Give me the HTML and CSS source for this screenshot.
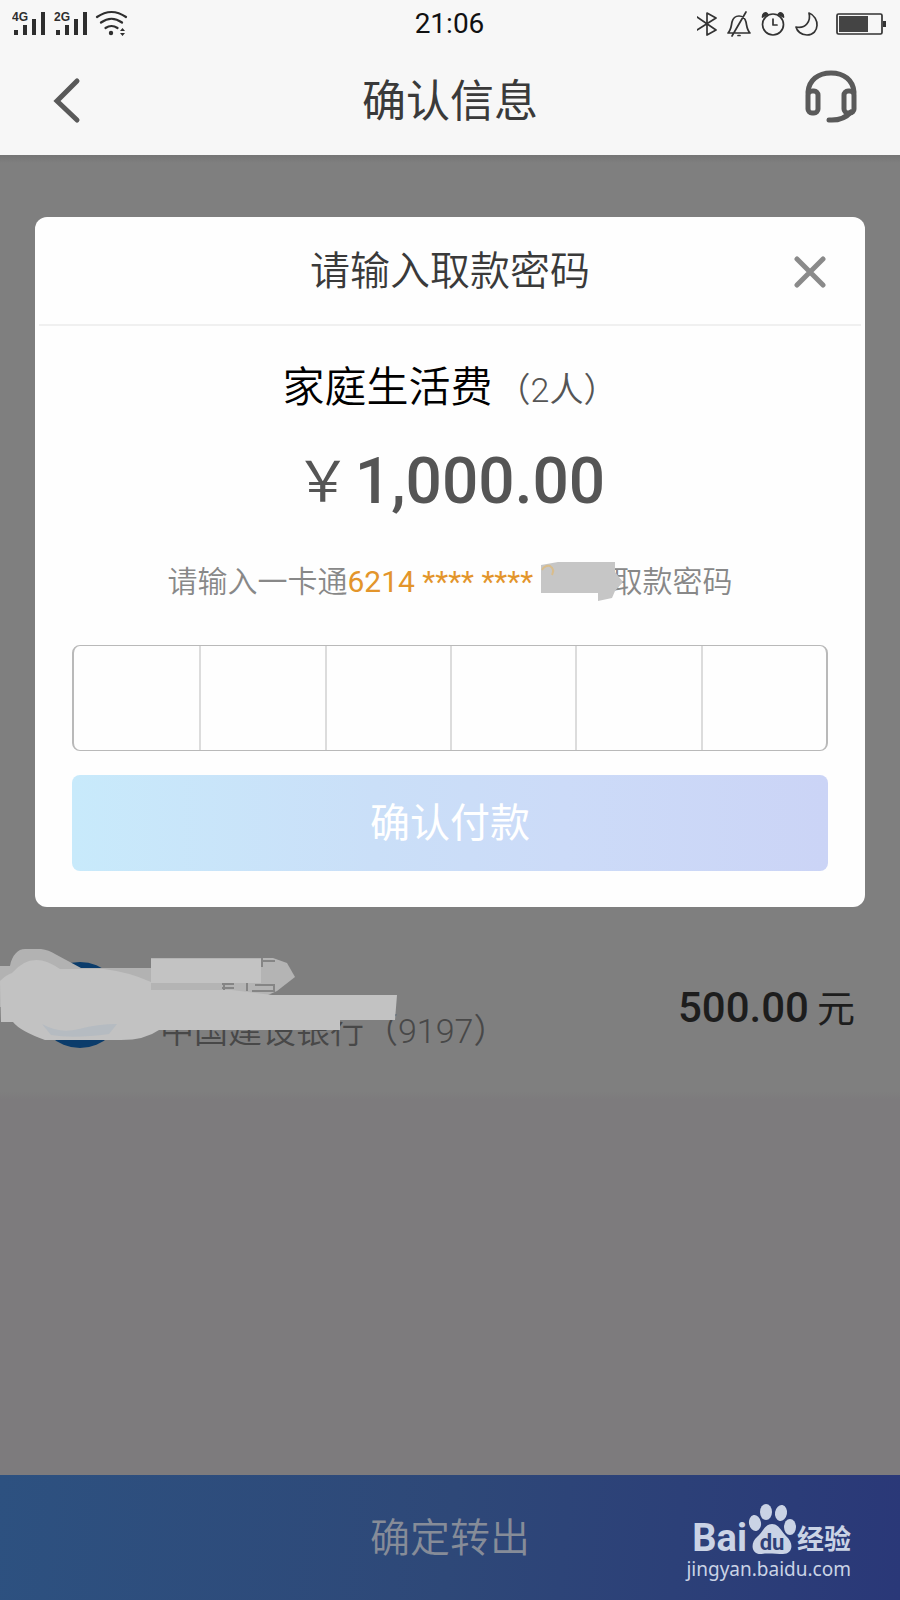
FILE: index.html
```html
<!DOCTYPE html>
<html lang="zh-CN">
<head>
<meta charset="utf-8">
<meta name="viewport" content="width=device-width, initial-scale=1">
<title>确认信息</title>
<link rel="stylesheet" href="styles.css">
</head>
<body>
<header class="top">
  <div class="status">
    <svg class="status-left" width="120" height="30" viewBox="0 0 120 30" aria-hidden="true">
      <g fill="#2e2e2e">
        <text x="0" y="12" class="net">4G</text>
        <path d="M2 21h4v5H2zM11 16h4v10h-4zM20 10h4v16h-4zM29 3h4v23h-4z"/>
        <text x="42" y="12" class="net">2G</text>
        <path d="M44 21h4v5h-4zM53 16h4v10h-4zM62 10h4v16h-4zM71 3h4v23h-4z"/>
        <circle cx="99" cy="24" r="2.200"/>
        <path d="M108 22l2.500-3 2.500 3zM108 24l2.500 3 2.500-3z"/>
      </g>
      <g fill="none" stroke="#2e2e2e" stroke-width="2.200" stroke-linecap="round">
        <path d="M85 8q14.500-10 29 0M89 13.500q10.500-7.500 21 0M93.500 19q6-4 12 0"/>
      </g>
    </svg>
    <time class="clock">21:06</time>
    <svg class="status-right" width="190" height="30" viewBox="0 0 190 30" aria-hidden="true">
      <g fill="none" stroke="#333" stroke-width="1.700" stroke-linejoin="round" stroke-linecap="round">
        <path d="M0 8l19 13-9 5V4l9 5L0 21"/>
        <path d="M31 24c3-3 3-6 4-11 1-4 3-6 7-6s6 2 7 6c1 5 1 8 4 11zM41 26.500h2M49 3L35 27"/>
        <circle cx="76" cy="15.500" r="10.500"/>
        <path d="M76 10v6h4"/>
        <path d="M65.500 8c0-4 3-5 5-3zM86.500 8c0-4-3-5-5-3z" fill="#333"/>
        <path d="M112 4c11 4 11 22-2 22-6 0-10-4-11-8 10 2 15-6 13-14z"/>
        <rect x="140" y="5" width="45" height="20" rx="1.500"/>
        <path d="M142 7h29v16h-29z" fill="#444" stroke="none"/>
        <path d="M186 12h3v6h-3z" fill="#333" stroke="none"/>
      </g>
    </svg>
  </div>
  <nav class="nav">
    <button class="icon-btn" type="button" aria-label="返回">
      <svg width="30" height="48" viewBox="0 0 30 48"><path d="M25 5L5 25l20 19" fill="none" stroke="#595959" stroke-width="5" stroke-linecap="round" stroke-linejoin="miter"/></svg>
    </button>
    <h1 class="nav-title">确认信息</h1>
    <button class="icon-btn help" type="button" aria-label="客服">
      <svg width="54" height="54" viewBox="0 0 54 54"><g fill="none" stroke="#5a5a5a" stroke-width="5" stroke-linecap="round"><path d="M4 22C5 10 14 3 27 3S49 10 50 22"/><rect x="4" y="21" width="10" height="22" rx="4"/><rect x="40" y="21" width="10" height="22" rx="4"/><path d="M47 42q-8 9-22 8"/></g></svg>
    </button>
  </nav>
</header>

<main class="content">
  <section class="dialog" role="dialog" aria-labelledby="dlg-title">
    <div class="dialog-head">
      <h2 class="dialog-title" id="dlg-title">请输入取款密码</h2>
      <button class="close" type="button" aria-label="关闭">
        <svg width="32" height="32" viewBox="0 0 32 32"><path d="M3 3l26 26M29 3L3 29" fill="none" stroke="#8a8a8a" stroke-width="5" stroke-linecap="round"/></svg>
      </button>
    </div>
    <div class="dialog-body">
      <p class="purpose"><span>家庭生活费</span><span class="people">（2人）</span></p>
      <p class="total"><span class="yen">￥</span><span>1,000.00</span></p>
      <p class="hint">请输入一卡通<span class="card-no">6214 **** **** <span class="masked">2<svg class="mask" width="84" height="42" viewBox="0 0 84 42" aria-hidden="true"><path d="M0 3L17 0h57v10l8 10-8 9-3 7-14 3v-8H0z" fill="#c6c6c6"/><path d="M1 8q3-5 8-4 5 3 2 9" fill="none" stroke="#d9bd8c" stroke-width="2"/></svg></span></span>取款密码</p>
      <div class="pin" role="group" aria-label="取款密码">
        <input type="password" maxlength="1" aria-label="第1位">
        <input type="password" maxlength="1" aria-label="第2位">
        <input type="password" maxlength="1" aria-label="第3位">
        <input type="password" maxlength="1" aria-label="第4位">
        <input type="password" maxlength="1" aria-label="第5位">
        <input type="password" maxlength="1" aria-label="第6位">
      </div>
      <button class="pay" type="button">确认付款</button>
    </div>
  </section>

  <section class="member">
    <div class="logo"></div>
    <div class="bank">中国建设银行（9197）</div>
    <div class="sum"><span class="sum-num">500.00</span><span class="sum-unit">元</span></div>
    <svg class="scribble" width="400" height="100" viewBox="0 0 400 100" aria-hidden="true">
      <path d="M151 9h122l14 5 8 14-18 14-9 4H151z" fill="#b4b4b4"/>
      <path d="M0 17h10C12 6 18 0 25 0h16q8 1 14 5l26 14h70v35L0 58z" fill="#b2b2b2"/>
      <g fill="none" stroke="#858585" stroke-width="2"><path d="M262 9v9M262 12h13M222 35h12M224 35v6M247 34v8M255 36h19v6h-22M222 39h12"/></g>
      <path d="M151 10h110v24H151z" fill="#c3c3c3"/>
      <path d="M0 32q6-6 12-8 20-24 48-4h44q25 3 47 13v8h81l40 5h125l-2 25h-55v10H159q-14 10-38 10H45Q20 82 13 73H1z" fill="#c2c2c2"/>
      <path d="M42 75q18 10 37 5t38-5l-8 10q-36 5-58 1z" fill="#b5bbc1"/>
    </svg>
  </section>
</main>

<footer class="footer">
  <button class="transfer" type="button">确定转出</button>
  <div class="brand">
    <div class="brand-row">
      <span class="bai">Bai</span>
      <svg width="50" height="52" viewBox="0 0 50 52" aria-hidden="true">
        <g fill="#cad3e5"><ellipse cx="8" cy="20" rx="6" ry="8" transform="rotate(-10 8 20)"/><ellipse cx="19" cy="9" rx="6" ry="8"/><ellipse cx="34" cy="10" rx="6" ry="8" transform="rotate(10 34 10)"/><ellipse cx="43" cy="24" rx="6" ry="8"/><path d="M25 21c7 0 9 7 14 12 9 8 6 18-3 18-6 0-16-1-21 0C4 52 3 40 10 34c6-5 8-13 15-13z"/></g>
        <text x="25" y="47" class="du">du</text>
      </svg>
      <span class="jy">经验</span>
    </div>
    <div class="brand-url">jingyan.baidu.com</div>
  </div>
</footer>
</body>
</html>
```
FILE: styles.css
```css
* { box-sizing: border-box; }

body {
  margin: 0;
  min-height: 100vh;
  display: flex;
  flex-direction: column;
  background: #7d7b7d;
  font-family: Roboto, "Noto Sans CJK SC", sans-serif;
  color: #3a3a3a;
}

h1, h2, p { margin: 0; font-weight: 350; }

button {
  border: 0;
  padding: 0;
  background: none;
  font-family: inherit;
  cursor: pointer;
}

svg { display: block; }

/* status bar and navigation */
.top { background: #f7f7f7; }

.status {
  display: grid;
  grid-template-columns: 1fr auto 1fr;
  align-items: center;
  height: 48px;
  padding: 0 13px 0 12px;
}

.status-right { justify-self: end; }

.net { font: bold 12px "Liberation Sans", sans-serif; }

.clock {
  font-size: 28px;
  line-height: 48px;
  color: #111;
}

.nav {
  display: grid;
  grid-template-columns: 1fr auto 1fr;
  align-items: center;
  height: 107px;
  padding: 0 42px 4px;
}

.icon-btn { justify-self: start; padding-left: 10px; }

.help { justify-self: end; padding: 0 0 6px; }

.nav-title {
  padding-top: 4px;
  font-size: 44px;
  line-height: 64px;
  font-weight: 400;
}

/* dimmed page */
.content {
  flex: 1;
  padding-top: 62px;
  background: linear-gradient(#757575, #7f7f7f 8px, #7f7f7f 936px, #7d7b7d 944px);
}

.dialog {
  margin: 0 35px;
  border-radius: 12px;
  background: #fefefe;
}

.dialog-head {
  position: relative;
  height: 109px;
  margin: 0 4px;
  padding-top: 25px;
  border-bottom: 2px solid #f0f0f0;
  text-align: center;
}

.dialog-title {
  font-size: 40px;
  line-height: 60px;
}

.close {
  position: absolute;
  top: 39px;
  right: 35px;
}

.dialog-body {
  display: flex;
  flex-direction: column;
  padding: 32px 37px 36px;
}

.purpose {
  display: flex;
  justify-content: center;
  align-items: baseline;
  gap: 4px;
  font-size: 42px;
  line-height: 60px;
  color: #000;
}

.people {
  font-size: 34px;
  color: #555;
}

.total {
  display: flex;
  justify-content: center;
  gap: 4px;
  padding-top: 24px;
  font-size: 64px;
  line-height: 76px;
  font-weight: 500;
  color: #555;
}

.yen {
  font-size: 56px;
  font-weight: 400;
}

.hint {
  padding-top: 40px;
  text-align: center;
  font-size: 30px;
  line-height: 44px;
  white-space: nowrap;
  color: #888;
}

.card-no {
  font-weight: 400;
  color: #e3952b;
}

.masked {
  position: relative;
  display: inline-block;
  width: 72px;
  text-align: left;
}

.mask {
  position: absolute;
  top: 2px;
  left: 0;
}

.pin {
  display: grid;
  grid-template-columns: repeat(6, 1fr);
  height: 106px;
  margin: 41px 0 24px;
  border: 2px solid #b9b9b9;
  border-width: 1px 2px;
  border-radius: 8px;
  overflow: hidden;
}

.pin input {
  min-width: 0;
  border: 0;
  border-left: 2px solid #dcdcdc;
  background: none;
  text-align: center;
  font-size: 40px;
  outline: none;
}

.pin input:first-child { border-left: 0; }

.pay {
  height: 96px;
  padding-bottom: 6px;
  border-radius: 8px;
  background: linear-gradient(90deg, #c8eafb, #cadff8 40%, #ccdbf8 65%, #cbd4f6);
  font-size: 40px;
  color: #fff;
}

/* recipient row */
.member {
  position: relative;
  display: flex;
  align-items: center;
  height: 168px;
  margin-top: 20px;
  padding: 0 45px 12px 37px;
}

.logo {
  width: 86px;
  height: 86px;
  border-radius: 50%;
  background: #0b3c6b;
}

.bank {
  flex: 1;
  padding: 52px 0 0 37px;
  font-size: 34px;
  line-height: 48px;
  font-weight: 350;
  white-space: nowrap;
  color: #484848;
}

.sum {
  display: flex;
  align-items: baseline;
  gap: 8px;
  color: #1d1d1d;
}

.sum-num {
  font-size: 42px;
  font-weight: 500;
}

.sum-unit { font-size: 38px; }

.scribble {
  position: absolute;
  top: 22px;
  left: 0;
}

/* bottom action */
.footer {
  position: relative;
  display: flex;
  height: 125px;
  background: linear-gradient(95deg, #2d5180, #2e4878 50%, #2a3878);
}

.transfer {
  flex: 1;
  padding-bottom: 6px;
  font-size: 40px;
  font-weight: 350;
  color: #868c98;
}

.brand {
  position: absolute;
  right: 49px;
  bottom: 17px;
  color: #cad3e5;
}

.brand-row {
  display: flex;
  align-items: flex-end;
  justify-content: flex-end;
}

.bai {
  font-size: 38px;
  line-height: 34px;
  font-weight: 700;
}

.jy {
  font-size: 27px;
  line-height: 30px;
  font-weight: 700;
}

.du {
  font: bold 22px Roboto, sans-serif;
  fill: #2e4178;
  text-anchor: middle;
}

.brand-url {
  font-family: "Noto Sans", sans-serif;
  font-size: 19px;
  line-height: 28px;
}
```
